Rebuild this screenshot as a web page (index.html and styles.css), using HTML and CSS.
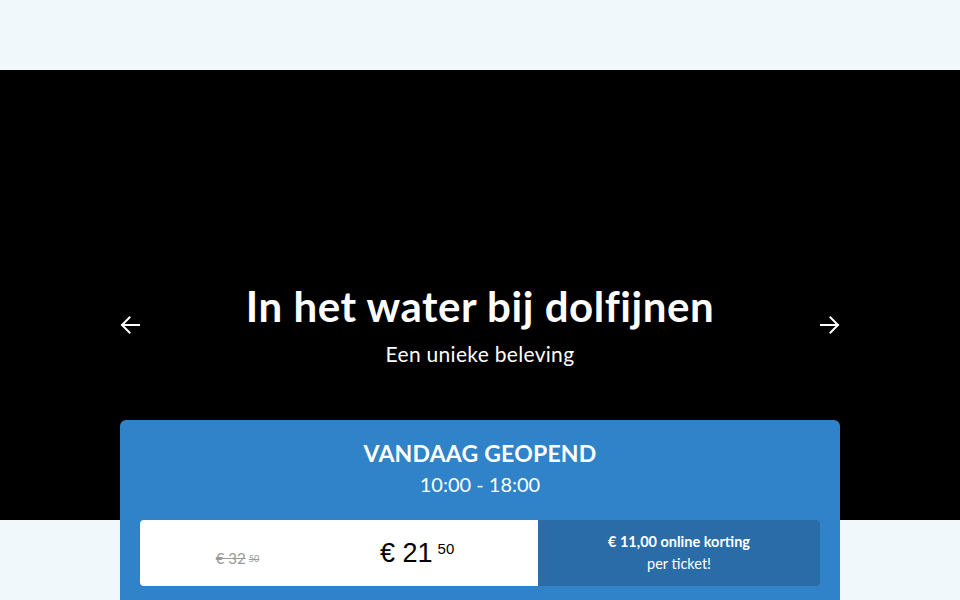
FILE: index.html
```html
<!DOCTYPE html>
<html lang="nl">
<head>
    <meta charset="UTF-8">
    <meta name="viewport" content="width=device-width, initial-scale=1.0">
    <title>In het water bij dolfijnen</title>
    <link rel="stylesheet" href="styles.css">
</head>
<body>

    <!-- Top bar -->
    <header class="topbar"></header>

    <!-- Hero slider -->
    <section class="hero">
        <button class="hero-arrow" aria-label="Vorige">
            <svg width="20" height="20" viewBox="0 0 20 20" fill="none" stroke="#fff" stroke-width="2" stroke-linecap="square" stroke-linejoin="miter">
                <path d="M19 10H2M9.5 2.5L2 10l7.5 7.5"/>
            </svg>
        </button>
        <div class="hero-text">
            <h1>In het water bij dolfijnen</h1>
            <p>Een unieke beleving</p>
        </div>
        <button class="hero-arrow" aria-label="Volgende">
            <svg width="20" height="20" viewBox="0 0 20 20" fill="none" stroke="#fff" stroke-width="2" stroke-linecap="square" stroke-linejoin="miter">
                <path d="M1 10h17M10.5 2.5L18 10l-7.5 7.5"/>
            </svg>
        </button>
    </section>

    <!-- Opening hours and tickets -->
    <section class="ticket-card">
        <h2>VANDAAG GEOPEND</h2>
        <p class="hours">10:00 - 18:00</p>
        <div class="price-row">
            <div class="price-old">€ 32<sup>50</sup></div>
            <div class="price-new">€ 21<sup>50</sup></div>
            <div class="price-note">
                <strong>€ 11,00 online korting</strong>
                <span>per ticket!</span>
            </div>
        </div>
    </section>

</body>
</html>
```

FILE: styles.css
```css
body {
    margin: 0;
    font-family: Lato, "Open Sans", Arial, sans-serif;
    background-color: #f1f8fb;
    color: #fff;
}
.topbar {
    height: 70px;
    background-color: #f1f8fb;
}
.hero {
    height: 450px;
    background-color: #000;
    display: flex;
    align-items: center;
    justify-content: space-between;
    padding: 60px 120px 0;
    box-sizing: border-box;
}
.hero-arrow {
    background: none;
    border: none;
    padding: 0;
    width: 20px;
    height: 20px;
    cursor: pointer;
}
.hero-text {
    text-align: center;
}
.hero-text h1 {
    margin: 0;
    font-size: 42px;
    line-height: 48px;
    font-weight: 700;
    letter-spacing: 0.55px;
}
.hero-text p {
    margin: 10px 0 0;
    font-size: 21px;
    line-height: 28px;
    font-weight: 400;
    letter-spacing: 0.3px;
}
.ticket-card {
    position: relative;
    width: 720px;
    margin: -100px auto 0;
    background-color: #3083c8;
    border-radius: 6px 6px 0 0;
    padding: 18px 20px 20px;
    box-sizing: border-box;
    text-align: center;
}
.ticket-card h2 {
    margin: 0;
    font-size: 23px;
    font-weight: 700;
    line-height: 30px;
    letter-spacing: 0.2px;
}
.hours {
    margin: 3px 0 0;
    font-size: 20px;
    line-height: 26px;
}
.price-row {
    display: flex;
    margin-top: 23px;
    height: 66px;
    border-radius: 4px;
    overflow: hidden;
}
.price-old, .price-new {
    width: 199px;
    background: #fff;
    display: flex;
    align-items: center;
    box-sizing: border-box;
}
.price-old {
    justify-content: center;
    color: #9a9a9a;
    font-size: 15px;
    text-decoration: line-through;
    padding-top: 10px;
    padding-right: 4px;
}
.price-old sup {
    font-size: 9px;
    margin-left: 3px;
}
.price-new {
    color: #000;
    font-family: "Liberation Sans", Arial, sans-serif;
    font-size: 27px;
    padding-left: 41px;
}
.price-new sup {
    font-size: 15px;
    font-weight: 400;
    margin-left: 5px;
    position: relative;
    top: -5px;
}
.price-note {
    flex: 1;
    background-color: #2a6ca7;
    display: flex;
    flex-direction: column;
    justify-content: center;
    font-size: 14.5px;
    line-height: 22px;
}
```
